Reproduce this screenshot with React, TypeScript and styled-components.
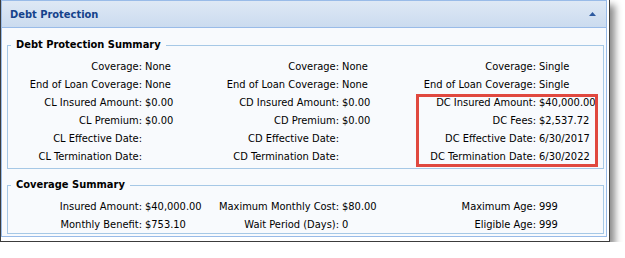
import styled, { createGlobalStyle } from "styled-components";

const GlobalStyle = createGlobalStyle`
  html, body {
    margin: 0;
    padding: 0;
    background: #ffffff;
  }
  body {
    font-family: "DejaVu Sans Condensed", "Liberation Sans", Arial, sans-serif;
    font-size: 11px;
    color: #000;
  }
`;

type Field = { label: string; value?: string };

const summaryRows: Field[][] = [
  [
    { label: "Coverage:", value: "None" },
    { label: "Coverage:", value: "None" },
    { label: "Coverage:", value: "Single" },
  ],
  [
    { label: "End of Loan Coverage:", value: "None" },
    { label: "End of Loan Coverage:", value: "None" },
    { label: "End of Loan Coverage:", value: "Single" },
  ],
  [
    { label: "CL Insured Amount:", value: "$0.00" },
    { label: "CD Insured Amount:", value: "$0.00" },
    { label: "DC Insured Amount:", value: "$40,000.00" },
  ],
  [
    { label: "CL Premium:", value: "$0.00" },
    { label: "CD Premium:", value: "$0.00" },
    { label: "DC Fees:", value: "$2,537.72" },
  ],
  [
    { label: "CL Effective Date:" },
    { label: "CD Effective Date:" },
    { label: "DC Effective Date:", value: "6/30/2017" },
  ],
  [
    { label: "CL Termination Date:" },
    { label: "CD Termination Date:" },
    { label: "DC Termination Date:", value: "6/30/2022" },
  ],
];

const coverageRows: Field[][] = [
  [
    { label: "Insured Amount:", value: "$40,000.00" },
    { label: "Maximum Monthly Cost:", value: "$80.00" },
    { label: "Maximum Age:", value: "999" },
  ],
  [
    { label: "Monthly Benefit:", value: "$753.10" },
    { label: "Wait Period (Days):", value: "0" },
    { label: "Eligible Age:", value: "999" },
  ],
];

const FieldGrid = ({ rows }: { rows: Field[][] }) => (
  <Grid>
    {rows.flat().map((f, idx) => (
      <Cell key={idx}>
        <Label>{f.label}</Label>
        <Value>{f.value ?? ""}</Value>
      </Cell>
    ))}
  </Grid>
);

export default function App() {
  return (
    <>
      <GlobalStyle />
      <Frame>
        <Panel>
          <Header>
            <Title>Debt Protection</Title>
            <Collapse viewBox="0 0 7 4" width="7" height="4">
              <path d="M0 4 L3.5 0 L7 4 Z" fill="#2d5aa0" />
            </Collapse>
          </Header>
          <Body>
            <Group $top={10} $bottom={3}>
              <Legend>Debt Protection Summary</Legend>
              <FieldGrid rows={summaryRows} />
            </Group>
            <Group $top={9} $bottom={0}>
              <Legend>Coverage Summary</Legend>
              <FieldGrid rows={coverageRows} />
            </Group>
          </Body>
        </Panel>
        <Highlight />
      </Frame>
    </>
  );
}

const Frame = styled.div`
  position: relative;
  width: 610px;
  box-sizing: border-box;
  border: 1px solid #3c3c3c;
  border-top: none;
  background: #ffffff;
  box-shadow: 5px 5px 7px rgba(0, 0, 0, 0.45);
  padding: 0 2px 4px 0;
`;

const Panel = styled.div`
  border: 1px solid #99bbe8;
  background: #f8fafd;
`;

const Header = styled.div`
  height: 26px;
  display: flex;
  align-items: center;
  justify-content: space-between;
  padding: 0 10px 0 8px;
  background: linear-gradient(#dee8f5, #cbdbef);
  border-bottom: 1px solid #99bbe8;
`;

const Title = styled.span`
  font-size: 11px;
  font-weight: bold;
  color: #15428b;
`;

const Collapse = styled.svg`
  display: block;
  margin-top: -1px;
`;

const Body = styled.div`
  padding: 0 2px 2px 5px;
`;

const Group = styled.fieldset<{ $top: number; $bottom: number }>`
  margin: ${(p) => p.$top}px 0 0 0;
  padding: 5px 0 ${(p) => p.$bottom}px 0;
  border: 1px solid #a6c8e6;
  min-width: 0;
`;

const Legend = styled.legend`
  margin-left: 3px;
  padding: 0 5px;
  font-size: 11px;
  line-height: 14px;
  font-weight: bold;
  color: #000;
`;

const Grid = styled.div`
  display: grid;
  grid-template-columns: repeat(3, 197px);
`;

const Cell = styled.div`
  display: grid;
  grid-template-columns: 134px 1fr;
  column-gap: 3px;
  height: 18px;
  align-items: center;
  white-space: nowrap;
`;

const Label = styled.span`
  text-align: right;
`;

const Value = styled.span`
  text-align: left;
`;

const Highlight = styled.div`
  position: absolute;
  left: 415px;
  top: 94px;
  width: 182px;
  height: 73px;
  box-sizing: border-box;
  border: 3px solid #e0483f;
  pointer-events: none;
`;
